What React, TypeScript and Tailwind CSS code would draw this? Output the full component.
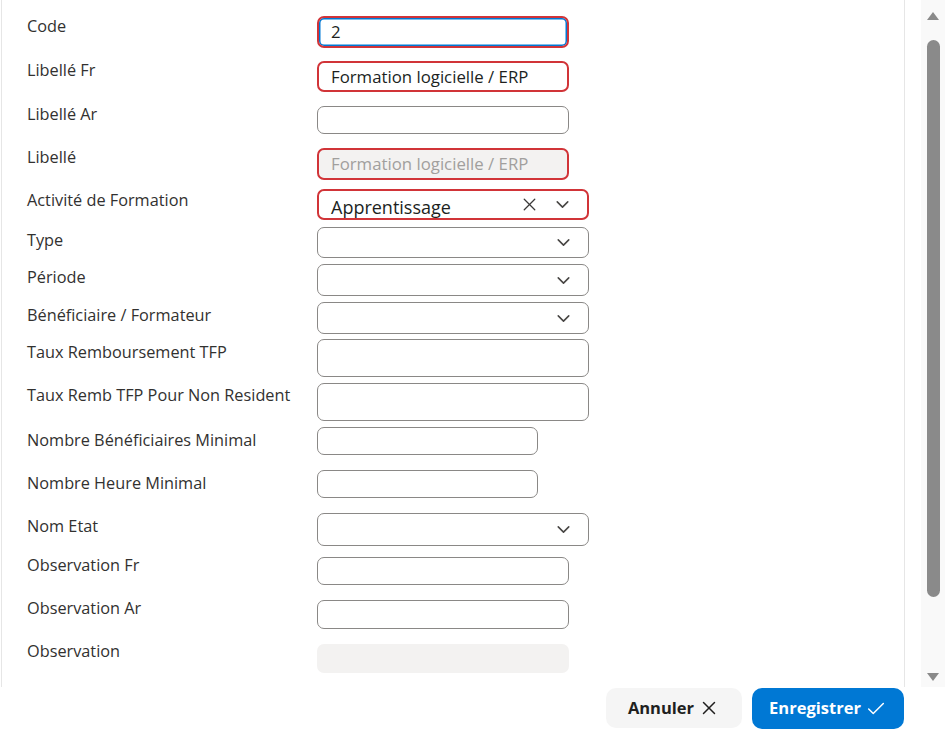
import React from 'react';
import { X, Check, ChevronDown } from 'lucide-react';

type Kind = 'input' | 'select' | 'disabled';

interface Field {
  label: string;
  kind: Kind;
  value?: string;
  error?: boolean;
  focus?: boolean;
  clearable?: boolean;
  row: string;
  labelPad: string;
  boxTop: string;
  boxH: string;
  boxW: string;
}

const fields: Field[] = [
  { label: 'Code', kind: 'input', value: '2', error: true, focus: true, row: 'h-[44px]', labelPad: 'pt-0', boxTop: 'mt-0', boxH: 'h-[32px]', boxW: 'w-[252px]' },
  { label: 'Libellé Fr', kind: 'input', value: 'Formation logicielle / ERP', error: true, row: 'h-[44px]', labelPad: 'pt-0', boxTop: 'mt-[1px]', boxH: 'h-[31px]', boxW: 'w-[252px]' },
  { label: 'Libellé Ar', kind: 'input', row: 'h-[43px]', labelPad: 'pt-0', boxTop: 'mt-[2px]', boxH: 'h-[28px]', boxW: 'w-[252px]' },
  { label: 'Libellé', kind: 'disabled', value: 'Formation logicielle / ERP', error: true, row: 'h-[42px]', labelPad: 'pt-0', boxTop: 'mt-[1px]', boxH: 'h-[32px]', boxW: 'w-[252px]' },
  { label: 'Activité de Formation', kind: 'select', value: 'Apprentissage', error: true, clearable: true, row: 'h-[38px]', labelPad: 'pt-[1px]', boxTop: 'mt-0', boxH: 'h-[31px]', boxW: 'w-[272px]' },
  { label: 'Type', kind: 'select', row: 'h-[37px]', labelPad: 'pt-[3px]', boxTop: 'mt-0', boxH: 'h-[31px]', boxW: 'w-[272px]' },
  { label: 'Période', kind: 'select', row: 'h-[38px]', labelPad: 'pt-[3px]', boxTop: 'mt-0', boxH: 'h-[32px]', boxW: 'w-[272px]' },
  { label: 'Bénéficiaire / Formateur', kind: 'select', row: 'h-[37px]', labelPad: 'pt-[3px]', boxTop: 'mt-0', boxH: 'h-[32px]', boxW: 'w-[272px]' },
  { label: 'Taux Remboursement TFP', kind: 'input', row: 'h-[44px]', labelPad: 'pt-[3px]', boxTop: 'mt-0', boxH: 'h-[38px]', boxW: 'w-[272px]' },
  { label: 'Taux Remb TFP Pour Non Resident', kind: 'input', row: 'h-[44px]', labelPad: 'pt-[2px]', boxTop: 'mt-0', boxH: 'h-[38px]', boxW: 'w-[272px]' },
  { label: 'Nombre Bénéficiaires Minimal', kind: 'input', row: 'h-[43px]', labelPad: 'pt-[3px]', boxTop: 'mt-0', boxH: 'h-[28px]', boxW: 'w-[221px]' },
  { label: 'Nombre Heure Minimal', kind: 'input', row: 'h-[43px]', labelPad: 'pt-[3px]', boxTop: 'mt-0', boxH: 'h-[28px]', boxW: 'w-[221px]' },
  { label: 'Nom Etat', kind: 'select', row: 'h-[42px]', labelPad: 'pt-[3px]', boxTop: 'mt-0', boxH: 'h-[33px]', boxW: 'w-[272px]' },
  { label: 'Observation Fr', kind: 'input', row: 'h-[43px]', labelPad: 'pt-0', boxTop: 'mt-[2px]', boxH: 'h-[28px]', boxW: 'w-[252px]' },
  { label: 'Observation Ar', kind: 'input', row: 'h-[43px]', labelPad: 'pt-0', boxTop: 'mt-[2px]', boxH: 'h-[29px]', boxW: 'w-[252px]' },
  { label: 'Observation', kind: 'disabled', row: 'h-[40px]', labelPad: 'pt-0', boxTop: 'mt-[3px]', boxH: 'h-[29px]', boxW: 'w-[252px]' },
];

const FieldBox: React.FC<{ f: Field }> = ({ f }) => {
  const border = f.error
    ? 'border-2 border-[#d13438]'
    : f.kind === 'disabled'
      ? 'border border-transparent'
      : 'border border-[#8a8886]';
  const bg = f.kind === 'disabled' ? 'bg-[#f3f2f1]' : 'bg-white';
  const focusRing = f.focus ? 'shadow-[inset_0_0_0_1.5px_#0078d4]' : '';

  return (
    <div className={`${f.boxTop} ${f.boxH} ${f.boxW} ${border} ${bg} ${focusRing} flex items-center rounded-[7px] pl-3 pr-[14px]`}>
      {f.kind === 'select' ? (
        <>
          <span className="flex-1 pt-[5px] text-[18px] leading-6 text-[#201f1e]">{f.value}</span>
          {f.clearable && <X size={21} strokeWidth={1.5} className="mr-[12px] text-[#3b3a39]" />}
          <ChevronDown size={21} strokeWidth={1.8} className="text-[#484644]" />
        </>
      ) : (
        <span className={`text-[16.8px] leading-5 ${f.kind === 'disabled' ? 'text-[#a19f9d]' : 'text-[#201f1e]'}`}>
          {f.value}
        </span>
      )}
    </div>
  );
};

export default function App() {
  return (
    <div className="flex h-[751px] w-[945px] overflow-hidden bg-white font-['Open_Sans',sans-serif]">
      <div className="flex w-[921px] flex-col">
        {/* Zone du formulaire */}
        <div className="ml-[1px] h-[687px] w-[904px] border-l border-r border-[#e6e6e6] pl-[25px] pt-4">
          {fields.map((f) => (
            <div key={f.label} className={`flex ${f.row}`}>
              <label className={`w-[290px] ${f.labelPad} text-[16.3px] leading-5 text-[#323130]`}>{f.label}</label>
              <FieldBox f={f} />
            </div>
          ))}
        </div>

        {/* Boutons */}
        <div className="flex justify-end gap-[10px] pr-[17px] pt-[1px]">
          <button className="flex h-10 w-[136px] items-center justify-center gap-1 rounded-[10px] bg-[#f5f5f5] text-[16.5px] font-bold text-[#201f1e]">
            Annuler
            <X size={22} strokeWidth={1.6} />
          </button>
          <button className="flex h-[41px] w-[152px] items-center justify-center gap-1 rounded-[10px] bg-[#0078d4] text-[16.5px] font-bold text-white">
            Enregistrer
            <Check size={22} strokeWidth={1.6} />
          </button>
        </div>
      </div>

      {/* Barre de défilement */}
      <div className="flex h-[687px] w-[24px] flex-col items-center bg-[#f9f9f9] pt-3">
        <div className="h-0 w-0 border-x-[6px] border-b-[8px] border-x-transparent border-b-[#8a8a8a]" />
        <div className="mt-[20px] h-[557px] w-[13px] rounded-full bg-[#8a8a8a]" />
        <div className="mt-auto mb-[6px] h-0 w-0 border-x-[6px] border-t-[8px] border-x-transparent border-t-[#8a8a8a]" />
      </div>
    </div>
  );
}
